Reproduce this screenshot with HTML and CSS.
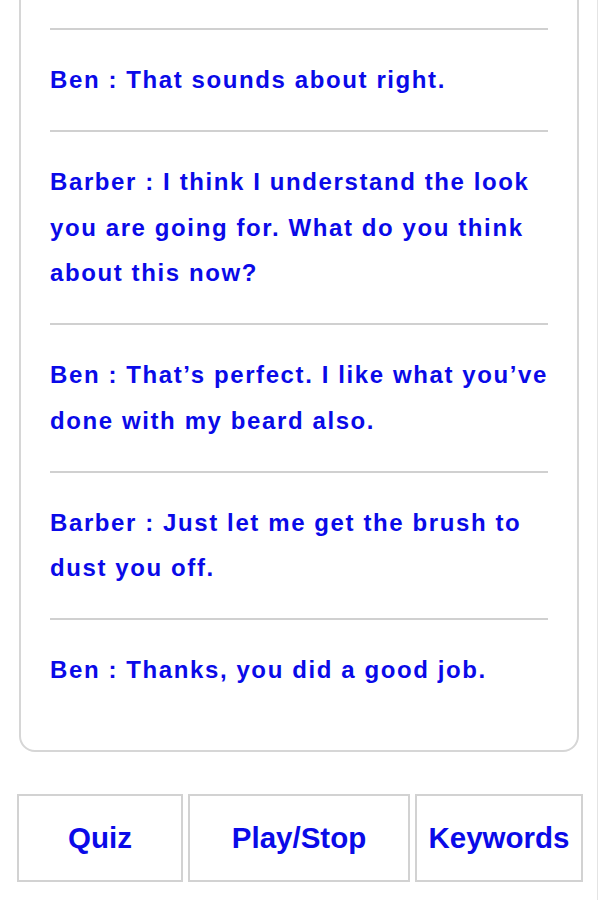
FILE: index.html
```html
<!DOCTYPE html>
<html>
  <head>
    <meta charset="utf-8"/>
    <meta name="viewport" content="width=device-width, initial-scale=1">
    <link rel="stylesheet" href="styles.css">
  </head>
<body>

<div class="page">
  <div class="chat">
    <div class="line">Ben : That sounds about right.</div>
    <div class="line">Barber : I think I understand the look you are going for. What do you think about this now?</div>
    <div class="line">Ben : That’s perfect. I like what you’ve done with my beard also.</div>
    <div class="line">Barber : Just let me get the brush to dust you off.</div>
    <div class="line">Ben : Thanks, you did a good job.</div>
  </div>

  <div class="buttons">
    <button class="button">Quiz</button>
    <button class="button">Play/Stop</button>
    <button class="button">Keywords</button>
  </div>
</div>

</body>
</html>
```

FILE: styles.css
```css
* {
  box-sizing: border-box;
}

body {
  margin: 0;
  font-family: "Liberation Sans", Arial, Helvetica, sans-serif;
  background-color: #fff;
}

.page {
  width: 598px;
  min-height: 900px;
  border-right: 1px solid #e4e4e4;
  padding-bottom: 20px;
}

.chat {
  margin: -20px 18px 0 19px;
  padding: 46px 29px 30px 29px;
  border: 2px solid #d6d6d6;
  border-radius: 16px;
}

.line {
  border-top: 2px solid #d0d0d0;
  padding: 27px 0 27.5px 0;
  font-size: 24px;
  line-height: 45.5px;
  font-weight: bold;
  letter-spacing: 1.6px;
  color: #0a0ae8;
}

.buttons {
  display: grid;
  grid-template-columns: 166px 222px 168px;
  gap: 5px;
  margin: 42px 0 0 17px;
}

.button {
  height: 88px;
  border: 2px solid #d2d2d2;
  background-color: #fff;
  font-family: "Liberation Sans", Arial, Helvetica, sans-serif;
  font-size: 29.5px;
  font-weight: bold;
  color: #0a0ae8;
  padding: 0;
  cursor: pointer;
}
```
